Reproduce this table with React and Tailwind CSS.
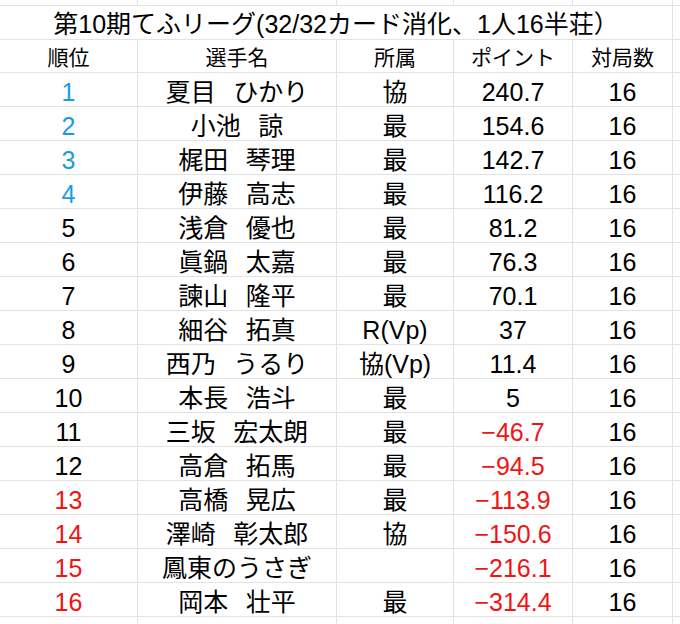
import React from 'react';

const gap = '\u2002\u2009';

const rows = [
  { rank: 1, name: `夏目${gap}ひかり`, team: '協', pt: '240.7', games: 16 },
  { rank: 2, name: `小池${gap}諒`, team: '最', pt: '154.6', games: 16 },
  { rank: 3, name: `梶田${gap}琴理`, team: '最', pt: '142.7', games: 16 },
  { rank: 4, name: `伊藤${gap}高志`, team: '最', pt: '116.2', games: 16 },
  { rank: 5, name: `浅倉${gap}優也`, team: '最', pt: '81.2', games: 16 },
  { rank: 6, name: `眞鍋${gap}太嘉`, team: '最', pt: '76.3', games: 16 },
  { rank: 7, name: `諫山${gap}隆平`, team: '最', pt: '70.1', games: 16 },
  { rank: 8, name: `細谷${gap}拓真`, team: 'R(Vp)', pt: '37', games: 16 },
  { rank: 9, name: `西乃${gap}うるり`, team: '協(Vp)', pt: '11.4', games: 16 },
  { rank: 10, name: `本長${gap}浩斗`, team: '最', pt: '5', games: 16 },
  { rank: 11, name: `三坂${gap}宏太朗`, team: '最', pt: '−46.7', games: 16 },
  { rank: 12, name: `高倉${gap}拓馬`, team: '最', pt: '−94.5', games: 16 },
  { rank: 13, name: `高橋${gap}晃広`, team: '最', pt: '−113.9', games: 16 },
  { rank: 14, name: `澤崎${gap}彰太郎`, team: '協', pt: '−150.6', games: 16 },
  { rank: 15, name: '鳳東のうさぎ', team: '', pt: '−216.1', games: 16 },
  { rank: 16, name: `岡本${gap}壮平`, team: '最', pt: '−314.4', games: 16 },
];

const cols = 'grid grid-cols-[138px_199px_117px_119px_100px_1fr]';
const line = 'border-[#e2e2e2]';
const cell = `flex items-center justify-center border-r border-b ${line} whitespace-pre`;

function rankColor(rank) {
  if (rank <= 4) return 'text-[#1c9ce0]';
  if (rank >= 13) return 'text-[#f01414]';
  return 'text-black';
}

export default function App() {
  return (
    <div className="w-[680px] h-[624px] overflow-hidden bg-white text-black font-['Liberation_Sans','Noto_Sans_CJK_JP',sans-serif]">
      {/* bottom edge of the row above */}
      <div className={`${cols} h-[6px]`}>
        <div className={`border-r border-b ${line}`} />
        <div className={`border-r border-b ${line}`} />
        <div className={`border-r border-b ${line}`} />
        <div className={`border-r border-b ${line}`} />
        <div className={`border-r border-b ${line}`} />
        <div className={`border-b ${line}`} />
      </div>

      {/* title */}
      <div className={`${cols} h-[34px]`}>
        <div className={`${cell} col-span-5 pt-[3px] text-[25px] leading-none`}>
          第10期てふリーグ(32/32カード消化、1人16半荘）
        </div>
        <div className={`border-b ${line}`} />
      </div>

      {/* header */}
      <div className={`${cols} h-[33px] text-[21px] leading-none`}>
        <div className={`${cell} pt-[3px]`}>順位</div>
        <div className={`${cell} pt-[3px]`}>選手名</div>
        <div className={`${cell} pt-[3px]`}>所属</div>
        <div className={`${cell} pt-[3px]`}>ポイント</div>
        <div className={`${cell} pt-[3px]`}>対局数</div>
        <div className={`border-b ${line}`} />
      </div>

      {rows.map((r) => (
        <div key={r.rank} className={`${cols} h-[34px] text-[25px] leading-none`}>
          <div className={`${cell} pt-[5px] ${rankColor(r.rank)}`}>{r.rank}</div>
          <div className={`${cell} pt-[5px]`}>{r.name}</div>
          <div className={`${cell} pt-[5px]`}>{r.team}</div>
          <div className={`${cell} pt-[5px] ${r.pt.startsWith('−') ? 'text-[#f01414]' : 'text-black'}`}>{r.pt}</div>
          <div className={`${cell} pt-[5px]`}>{r.games}</div>
          <div className={`border-b ${line}`} />
        </div>
      ))}

      <div className={`${cols} h-[10px]`}>
        <div className={`border-r ${line}`} />
        <div className={`border-r ${line}`} />
        <div className={`border-r ${line}`} />
        <div className={`border-r ${line}`} />
        <div className={`border-r ${line}`} />
        <div />
      </div>
    </div>
  );
}
